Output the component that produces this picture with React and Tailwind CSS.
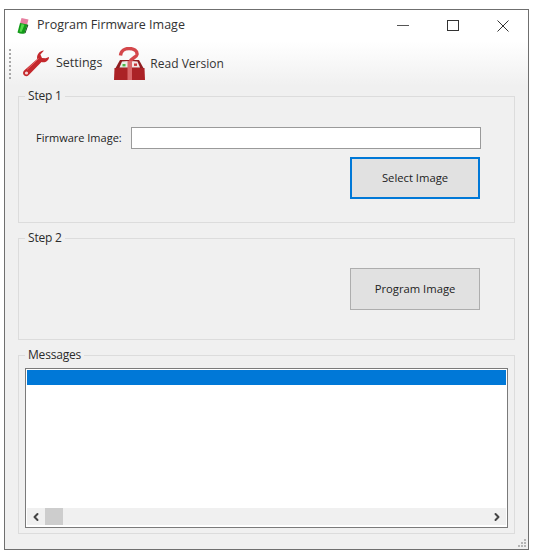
import React from 'react';
import { ChevronLeft, ChevronRight } from 'lucide-react';

const font = { fontFamily: '"Open Sans", "Noto Sans", sans-serif' };

const BatteryIcon = () => (
  <svg className="w-[14px] h-[18px]" viewBox="0 0 14 18">
    <path d="M5.5 1 L12.5 2.5 L11 8 L4 6.5 Z" fill="#e77fa0" />
    <path d="M4 6 L11.5 7.5 L8.5 16.5 Q5 17.5 1.5 15.5 Z" fill="#129a18" />
    <path d="M5.5 7 L8.5 7.8 L5.5 15 L3.5 14.5 Z" fill="#55d84a" />
    <path d="M8.5 16.5 L11.5 7.5 L12.3 8 L9.5 16 Z" fill="#0c3d10" />
  </svg>
);

const WrenchIcon = () => (
  <svg className="w-[28px] h-[28px]" viewBox="0 0 28 28">
    <path
      d="M27 7 C27 11 23 13 19.5 12 L6.8 25 C5.2 26.8 2.6 26.4 1.6 24.8 C0.6 23.2 1 21.4 2.4 20.2 L15.2 9 C14.4 5 17 1 22 0.5 L18.4 4.4 L20 8 L23.6 8.2 Z"
      fill="#c4282c"
    />
    <circle cx="4.5" cy="23" r="1.6" fill="#f6d5d5" />
    <path d="M16.5 8.5 L5 19.5" stroke="#e8696b" strokeWidth="1" />
  </svg>
);

const LockBoxIcon = () => (
  <svg className="w-[33px] h-[34px]" viewBox="0 0 33 34">
    <path d="M7 13 H26 L31 22 H2 Z" fill="#8f1d20" />
    <path d="M9 14.5 L15.5 14 L15 20.5 H6.5 Z" fill="#e9efe6" />
    <path d="M18.5 14 L24.5 14.5 L27 20.5 H18.5 Z" fill="#f3e6e6" />
    <rect x="9.5" y="17" width="3" height="2.4" fill="#48b848" />
    <rect x="21" y="16.5" width="3" height="2.4" fill="#c9363a" />
    <path
      d="M7.5 8.5 C8 3.5 12 1.5 16 1.5 C21 1.5 24.5 4 24 7.5 C23.5 10.5 18.5 10.5 17 15"
      fill="none"
      stroke="#d4474b"
      strokeWidth="3.4"
    />
    <path d="M1.5 21 H31.5 L32 33 H1 Z" fill="#ab2226" />
    <rect x="14.5" y="14" width="4.5" height="19" fill="#d9686b" />
  </svg>
);

const GroupBox = ({ title, className, children }) => (
  <fieldset className={`border border-[#dcdcdc] pl-[6px] pr-[6px] m-0 min-w-0 ${className}`}>
    <legend className="px-[3px] text-[12px] leading-[16px] tracking-[-0.2px] text-[#2b2b2b]">{title}</legend>
    {children}
  </fieldset>
);

const ActionButton = ({ label, focused, className }) => (
  <button
    className={`w-[130px] h-[42px] bg-[#e1e1e1] text-[11.25px] text-[#222] ${
      focused ? 'border-2 border-[#0078d7]' : 'border border-[#adadad]'
    } ${className}`}
  >
    {label}
  </button>
);

export default function App() {
  return (
    <div className="w-[538px] h-[558px] bg-white pt-[9px] pl-[4px]" style={font}>
      <div className="w-[525px] h-[541px] border border-[#6f6f6f] bg-[#f0f0f0] flex flex-col">
        {/* Title bar */}
        <div className="h-[31px] bg-white flex items-center pl-[11px] shrink-0">
          <BatteryIcon />
          <span className="ml-[7px] text-[12.5px] text-[#333]">Program Firmware Image</span>
          <div className="ml-auto flex items-center pr-[19px] gap-[38px]">
            <div className="w-[12px] h-[1px] bg-[#555]" />
            <div className="w-[12px] h-[11px] border border-[#333]" />
            <svg className="w-[12px] h-[12px]" viewBox="0 0 12 12">
              <path d="M0.5 0.5 L11.5 11.5 M11.5 0.5 L0.5 11.5" stroke="#333" strokeWidth="1" />
            </svg>
          </div>
        </div>

        {/* Toolbar */}
        <div className="h-[45px] shrink-0 bg-gradient-to-b from-white to-[#f0f0f0] flex items-center pl-[4px]">
          <div className="w-[2px] h-[30px] border-l-2 border-dotted border-[#a8a8a8]" />
          <div className="ml-[11px] flex items-center">
            <WrenchIcon />
            <span className="ml-[6px] text-[12.5px] text-[#333]">Settings</span>
          </div>
          <div className="ml-[11px] flex items-center">
            <LockBoxIcon />
            <span className="ml-[4px] text-[12px] text-[#333]">Read Version</span>
          </div>
        </div>

        <div className="flex-1 px-[13px] flex flex-col gap-[7px] text-[#222]">
          <GroupBox title="Step 1" className="h-[135px] mt-[2px]">
            <div className="flex items-center pl-[11px] pr-[27px] pt-[23px]">
              <span className="text-[11px] text-[#222] w-[95px]">Firmware Image:</span>
              <input className="w-[350px] h-[22px] bg-white border border-[#9a9a9a]" readOnly />
            </div>
            <div className="flex justify-end pr-[28px] mt-[8px]">
              <ActionButton label="Select Image" focused />
            </div>
          </GroupBox>

          <GroupBox title="Step 2" className="h-[110px]">
            <div className="flex justify-end pr-[28px] pt-[22px]">
              <ActionButton label="Program Image" />
            </div>
          </GroupBox>

          <GroupBox title="Messages" className="h-[187px]">
            <div className="h-[160px] mt-[5px] border border-[#7a7a7a] bg-white pt-[1px] px-[1px] pb-[2px] flex flex-col">
              <div className="h-[15px] bg-[#0078d7] shrink-0" />
              <div className="flex-1" />
              <div className="h-[17px] bg-[#f0f0f0] flex items-center justify-between shrink-0">
                <div className="flex items-center">
                  <ChevronLeft className="w-[18px] h-[12px] text-[#444]" strokeWidth={4} />
                  <div className="w-[18px] h-[17px] bg-[#cdcdcd]" />
                </div>
                <ChevronRight className="w-[18px] h-[12px] text-[#444]" strokeWidth={4} />
              </div>
            </div>
          </GroupBox>
        </div>

        {/* Resize grip */}
        <div className="relative h-0">
          <svg className="absolute right-[1px] bottom-[1px] w-[10px] h-[10px]" viewBox="0 0 10 10" fill="#b5b5b5">
            <rect x="7" y="1" width="2" height="2" />
            <rect x="4" y="4" width="2" height="2" />
            <rect x="7" y="4" width="2" height="2" />
            <rect x="1" y="7" width="2" height="2" />
            <rect x="4" y="7" width="2" height="2" />
            <rect x="7" y="7" width="2" height="2" />
          </svg>
        </div>
      </div>
    </div>
  );
}
